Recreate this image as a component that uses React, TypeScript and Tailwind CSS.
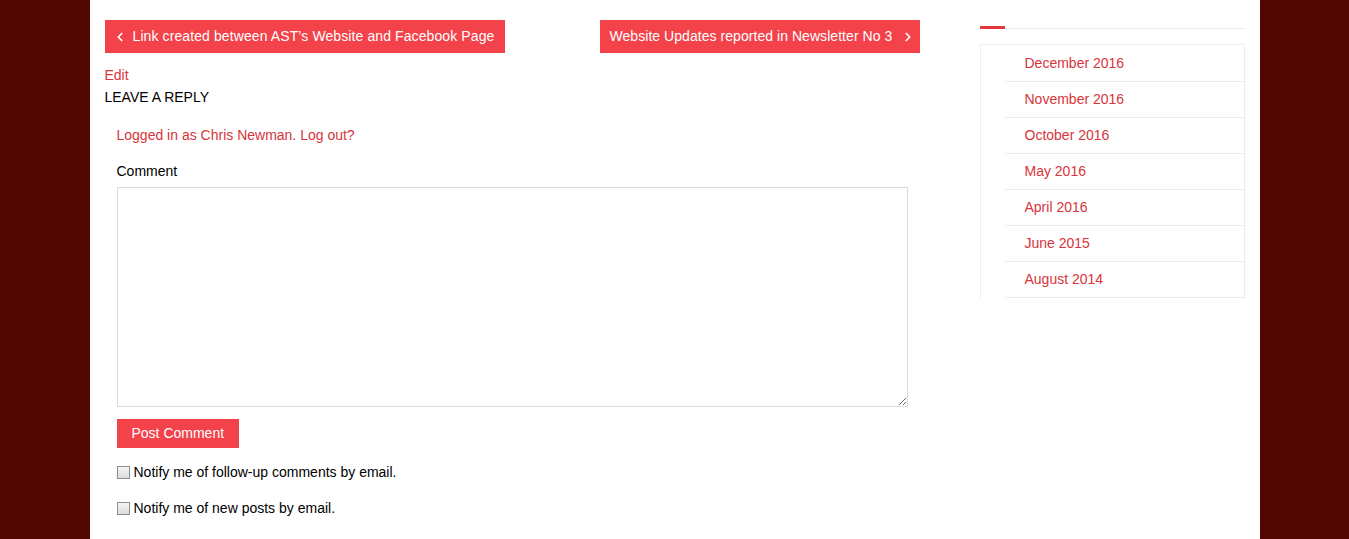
import { ChevronLeft, ChevronRight } from "lucide-react";

const archives = [
  "December 2016",
  "November 2016",
  "October 2016",
  "May 2016",
  "April 2016",
  "June 2015",
  "August 2014",
];

function Check({ label }: { label: string }) {
  return (
    <label className="flex h-[36px] items-center gap-[4px] text-black">
      <span className="h-[13px] w-[13px] border border-[#8f8f8f] bg-gradient-to-b from-[#f4f4f4] to-[#dcdcdc]" />
      <span>{label}</span>
    </label>
  );
}

export default function App() {
  return (
    <div className="min-h-[539px] bg-[#500800] font-['Liberation_Sans',Arial,sans-serif] text-[14px]">
      <div className="mx-auto flex min-h-[539px] w-[1170px] gap-[60px] bg-white px-[15px]">
        <main className="w-[815px] pt-[20px]">
          <nav className="flex justify-between">
            <a className="flex h-[33px] w-[400px] items-center gap-[6px] bg-[#f3424a] pl-[8px] text-white">
              <ChevronLeft size={14} strokeWidth={3} />
              <span className="tracking-[0.1px]">Link created between AST’s Website and Facebook Page</span>
            </a>
            <a className="flex h-[33px] w-[320px] items-center gap-[9px] bg-[#f3424a] pl-[10px] text-white">
              <span className="tracking-[0.05px]">Website Updates reported in Newsletter No 3</span>
              <ChevronRight size={14} strokeWidth={3} />
            </a>
          </nav>
          <div className="mt-[11px] leading-[22px] text-[#d8343b]">Edit</div>
          <h3 className="leading-[22px] text-black">LEAVE A REPLY</h3>
          <form className="px-[12px]">
            <p className="mt-[17px] leading-[20px] text-[#d8343b]">
              Logged in as Chris Newman. Log out?
            </p>
            <label className="mt-[16px] block leading-[20px] text-black">Comment</label>
            <textarea className="mt-[6px] block h-[220px] w-full border border-[#dcdcdc] bg-white" />
            <button
              type="button"
              className="mt-[12px] h-[29px] bg-[#f3424a] px-[15px] text-white"
            >
              Post Comment
            </button>
            <div className="mt-[6px]">
              <Check label="Notify me of follow-up comments by email." />
              <Check label="Notify me of new posts by email." />
            </div>
          </form>
        </main>
        <aside className="w-[265px] pt-[26px]">
          <div className="flex items-start">
            <span className="h-[3px] w-[25px] bg-[#e0393f]" />
            <span className="mt-[2px] h-px flex-1 bg-[#ececec]" />
          </div>
          <ul className="mt-[15px] border-l border-t border-[#efefef] pt-[1px]">
            {archives.map((a) => (
              <li
                key={a}
                className="ml-[24px] flex h-[36px] items-center border-b border-r border-[#ececec] pl-[20px] text-[#d8343b]"
              >
                {a}
              </li>
            ))}
          </ul>
        </aside>
      </div>
    </div>
  );
}
